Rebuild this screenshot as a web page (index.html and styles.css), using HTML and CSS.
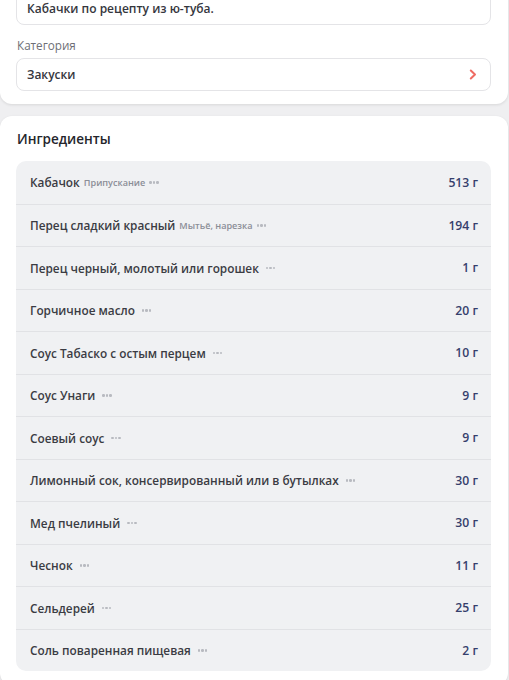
FILE: index.html
```html
<!DOCTYPE html>
<html lang="ru">
<head>
<meta charset="utf-8">
<link rel="stylesheet" href="styles.css">
</head>
<body>
<div class="page">
  <section class="card card-top">
    <div class="field">Кабачки по рецепту из ю-туба.</div>
    <div class="label">Категория</div>
    <div class="field select">
      <span>Закуски</span>
      <svg class="chev" width="8" height="11" viewBox="0 0 8 11"><path d="M1.8 1.5 L6 5.5 L1.8 9.5" fill="none" stroke="#ef6b63" stroke-width="2" stroke-linecap="round" stroke-linejoin="round"/></svg>
    </div>
  </section>
  <section class="card card-ing">
    <h2 class="title">Ингредиенты</h2>
    <div class="list">
      <div class="row"><div class="name">Кабачок<span class="note">Припускание</span><span class="dots"><i></i><i></i><i></i></span></div><div class="amt">513 г</div></div>
      <div class="row"><div class="name">Перец сладкий красный<span class="note">Мытьё, нарезка</span><span class="dots"><i></i><i></i><i></i></span></div><div class="amt">194 г</div></div>
      <div class="row"><div class="name">Перец черный, молотый или горошек<span class="dots solo"><i></i><i></i><i></i></span></div><div class="amt">1 г</div></div>
      <div class="row"><div class="name">Горчичное масло<span class="dots solo"><i></i><i></i><i></i></span></div><div class="amt">20 г</div></div>
      <div class="row"><div class="name">Соус Табаско с остым перцем<span class="dots solo"><i></i><i></i><i></i></span></div><div class="amt">10 г</div></div>
      <div class="row"><div class="name">Соус Унаги<span class="dots solo"><i></i><i></i><i></i></span></div><div class="amt">9 г</div></div>
      <div class="row"><div class="name">Соевый соус<span class="dots solo"><i></i><i></i><i></i></span></div><div class="amt">9 г</div></div>
      <div class="row"><div class="name">Лимонный сок, консервированный или в бутылках<span class="dots solo"><i></i><i></i><i></i></span></div><div class="amt">30 г</div></div>
      <div class="row"><div class="name">Мед пчелиный<span class="dots solo"><i></i><i></i><i></i></span></div><div class="amt">30 г</div></div>
      <div class="row"><div class="name">Чеснок<span class="dots solo"><i></i><i></i><i></i></span></div><div class="amt">11 г</div></div>
      <div class="row"><div class="name">Сельдерей<span class="dots solo"><i></i><i></i><i></i></span></div><div class="amt">25 г</div></div>
      <div class="row"><div class="name">Соль поваренная пищевая<span class="dots solo"><i></i><i></i><i></i></span></div><div class="amt">2 г</div></div>
    </div>
  </section>
</div>
</body>
</html>
```

FILE: styles.css
```css
html, body {
  margin: 0;
  padding: 0;
  background: #efeff1;
  font-family: "Open Sans", "Noto Sans", sans-serif;
  color: #35363d;
}
.page {
  margin-top: -8px;
  width: 508px;
  display: flex;
  flex-direction: column;
  gap: 12px;
}
.card {
  background: #fff;
  border-radius: 12px;
  box-shadow: 0 1px 3px rgba(0,0,0,0.10);
  padding: 0 17px 13px 16px;
}
.card-top {
  border-top-left-radius: 0;
  border-top-right-radius: 0;
}
.field {
  box-sizing: border-box;
  height: 33px;
  border: 1px solid #e4e4e7;
  border-radius: 8px;
  padding: 0 13px 0 10px;
  display: flex;
  align-items: center;
  font-size: 12px;
  font-weight: 600;
  color: #35363d;
}
.select {
  justify-content: space-between;
}
.chev { display: block; }
.label {
  margin: 12px 0 4px 1px;
  font-size: 11.7px;
  line-height: 17px;
  color: #6e6f76;
}
.card-ing {
  padding-top: 13px;
  padding-bottom: 14px;
}
.title {
  margin: 0 0 12px 1px;
  font-size: 13.5px;
  line-height: 20px;
  font-weight: 600;
  color: #24252b;
}
.list {
  background: #f0f1f3;
  border-radius: 10px;
  overflow: hidden;
}
.row {
  box-sizing: border-box;
  height: 42.5px;
  padding: 0 13px 0 14px;
  display: flex;
  align-items: center;
  justify-content: space-between;
  border-top: 1px solid #e1e2e5;
}
.row:first-child { border-top: none; }
.name {
  display: flex;
  align-items: center;
  font-size: 11.8px;
  font-weight: 600;
  color: #3b3c43;
}
.note {
  margin-left: 4px;
  font-size: 9.1px;
  font-weight: 600;
  color: #8b8e97;
}
.dots {
  display: inline-flex;
  gap: 1px;
  margin-left: 4px;
}
.dots.solo { margin-left: 7px; }
.dots i {
  display: block;
  width: 2.5px;
  height: 2.5px;
  border-radius: 50%;
  background: #b8bac0;
}
.amt {
  font-size: 12.2px;
  font-weight: 600;
  color: #363f6c;
}
```
